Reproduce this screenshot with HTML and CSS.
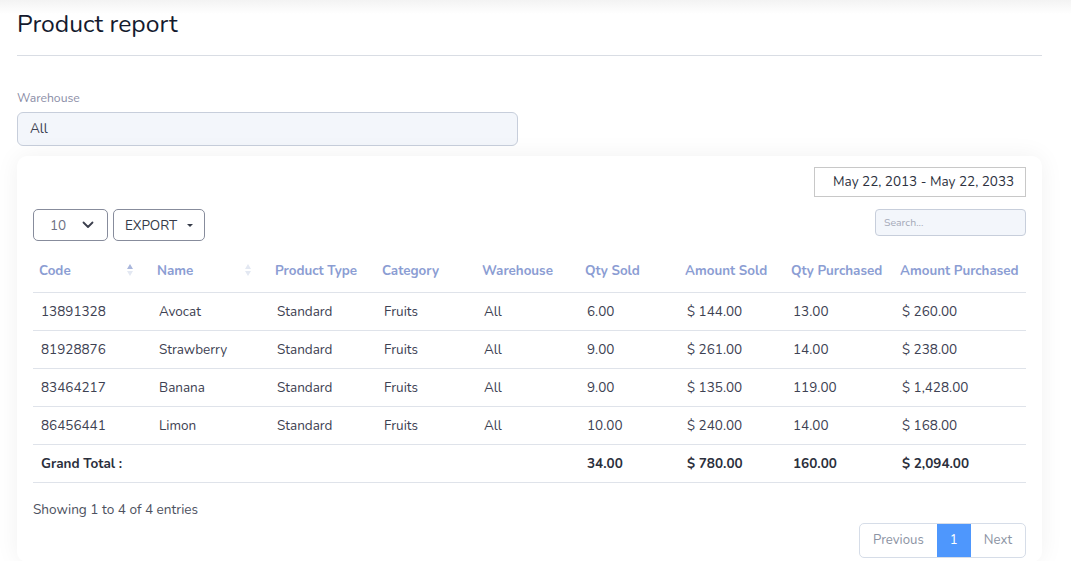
FILE: index.html
```html
<!DOCTYPE html>
<html>
<head>
<meta charset="utf-8">
<link rel="stylesheet" href="styles.css">
</head>
<body>
<div class="topshade"></div>
<main class="page">
  <h1 class="title">Product report</h1>
  <hr class="divider">
  <div class="field">
    <label class="label">Warehouse</label>
    <div class="select-input">All</div>
  </div>
  <section class="card">
    <div class="row-date">
      <div class="date-input">May 22, 2013 - May 22, 2033</div>
    </div>
    <div class="toolbar">
      <div class="left-tools">
        <div class="perpage">
          <span>10</span>
          <svg width="12" height="8" viewBox="0 0 12 8"><path d="M1.5 1.5 L6 6 L10.5 1.5" fill="none" stroke="#3b3f4d" stroke-width="1.8" stroke-linecap="round" stroke-linejoin="round"/></svg>
        </div>
        <div class="export">EXPORT <span class="caret"></span></div>
      </div>
      <div class="search">Search...</div>
    </div>
    <table class="report">
      <colgroup>
        <col style="width:118px"><col style="width:118px"><col style="width:107px"><col style="width:100px"><col style="width:103px"><col style="width:100px"><col style="width:106px"><col style="width:109px"><col>
      </colgroup>
      <thead>
        <tr>
          <th><div class="th-sort">Code <span class="sort"><i class="up active"></i><i class="down"></i></span></div></th>
          <th><div class="th-sort">Name <span class="sort"><i class="up"></i><i class="down"></i></span></div></th>
          <th>Product Type</th>
          <th>Category</th>
          <th>Warehouse</th>
          <th>Qty Sold</th>
          <th>Amount Sold</th>
          <th>Qty Purchased</th>
          <th>Amount Purchased</th>
        </tr>
      </thead>
      <tbody>
        <tr><td>13891328</td><td>Avocat</td><td>Standard</td><td>Fruits</td><td>All</td><td>6.00</td><td>$ 144.00</td><td>13.00</td><td>$ 260.00</td></tr>
        <tr><td>81928876</td><td>Strawberry</td><td>Standard</td><td>Fruits</td><td>All</td><td>9.00</td><td>$ 261.00</td><td>14.00</td><td>$ 238.00</td></tr>
        <tr><td>83464217</td><td>Banana</td><td>Standard</td><td>Fruits</td><td>All</td><td>9.00</td><td>$ 135.00</td><td>119.00</td><td>$ 1,428.00</td></tr>
        <tr><td>86456441</td><td>Limon</td><td>Standard</td><td>Fruits</td><td>All</td><td>10.00</td><td>$ 240.00</td><td>14.00</td><td>$ 168.00</td></tr>
      </tbody>
      <tfoot>
        <tr><td colspan="5">Grand Total :</td><td>34.00</td><td>$ 780.00</td><td>160.00</td><td>$ 2,094.00</td></tr>
      </tfoot>
    </table>
    <div class="info">Showing 1 to 4 of 4 entries</div>
    <div class="pager-row">
      <div class="pager">
        <span class="pg">Previous</span>
        <span class="pg current">1</span>
        <span class="pg">Next</span>
      </div>
    </div>
  </section>
</main>
</body>
</html>
```
FILE: styles.css
```css
* { box-sizing: border-box; }
html, body { margin: 0; padding: 0; background: #fff; }
body {
  font-family: "Nunito", "Noto Sans", "Open Sans", sans-serif;
  color: #3d4152;
  position: relative;
}
.topshade {
  position: absolute; left: 0; right: 0; top: 0; height: 14px;
  background: linear-gradient(#f3f3f3, rgba(255,255,255,0));
}
.page {
  position: relative;
  width: 1025px;
  margin-left: 17px;
  padding-top: 8px;
}
.title {
  margin: 0;
  font-size: 24.7px;
  font-weight: 400;
  color: #141a2e;
  line-height: 32px;
}
.divider {
  border: 0;
  border-top: 1px solid #d9dde4;
  margin: 15px 0 0 0;
}
.field { margin-top: 35px; }
.label {
  display: block;
  font-size: 12.2px;
  color: #8a8da6;
  line-height: 14px;
  margin-bottom: 7px;
}
.select-input {
  width: 501px;
  height: 34px;
  border: 1px solid #c7cedb;
  border-radius: 6px;
  background: #f3f6fb;
  font-size: 13.5px;
  color: #3d4152;
  padding-left: 12px;
  line-height: 32px;
}
.card {
  margin-top: 10px;
  background: #fff;
  border-radius: 10px;
  box-shadow: 0 0 24px rgba(0,0,0,0.06);
  padding: 11px 16px 4px 16px;
}
.row-date { display: flex; justify-content: flex-end; }
.date-input {
  width: 212px;
  height: 30px;
  border: 1px solid #c8c8c8;
  font-size: 13.5px;
  color: #2c3140;
  line-height: 28px;
  padding-left: 18px;
  white-space: nowrap;
}
.toolbar {
  display: flex;
  justify-content: space-between;
  align-items: flex-start;
  margin-top: 12px;
}
.left-tools { display: flex; gap: 5px; }
.perpage {
  width: 75px; height: 32px;
  border: 1px solid #878c9c;
  border-radius: 5px;
  display: flex; align-items: center;
  padding-left: 16px; gap: 16px;
  font-size: 13.5px; color: #6d7283;
}
.export {
  width: 92px; height: 32px;
  border: 1px solid #878c9c;
  border-radius: 5px;
  display: flex; align-items: center; justify-content: center;
  font-size: 13.5px; color: #353a48;
  gap: 6px;
}
.caret {
  display: inline-block; width: 0; height: 0;
  border-left: 3px solid transparent; border-right: 3px solid transparent;
  border-top: 3.5px solid #353a48;
  margin-left: 4px;
}
.search {
  width: 151px; height: 27px;
  border: 1px solid #c7cedb;
  border-radius: 4px;
  background: #f3f6fb;
  font-size: 10.5px;
  color: #a4a9b8;
  padding-left: 8px;
  line-height: 25px;
}
.report {
  width: 100%;
  border-collapse: collapse;
  table-layout: fixed;
  margin-top: 11px;
  font-size: 13.5px;
}
.report th {
  text-align: left;
  color: #8b9dd3;
  font-weight: 700;
  font-size: 13.4px;
  height: 40px;
  padding: 0 6px 3px 6px;
  border-bottom: 1px solid #dfe3ea;
  white-space: nowrap;
  vertical-align: middle;
}
.th-sort { display: flex; align-items: center; justify-content: space-between; padding-right: 12px; }
.sort { display: inline-flex; flex-direction: column; gap: 2px; }
.sort i { display: block; width: 0; height: 0; border-left: 3.5px solid transparent; border-right: 3.5px solid transparent; }
.sort .up { border-bottom: 5px solid #e3e8f2; }
.sort .down { border-top: 5px solid #e3e8f2; }
.sort .up.active { border-bottom-color: #a9b6dc; }
.report td {
  height: 38px;
  padding: 0 8px;
  border-bottom: 1px solid #dfe3ea;
  color: #3d4152;
  white-space: nowrap;
  vertical-align: middle;
}
.report tfoot td { font-weight: 700; color: #2b2f3c; }
.info {
  margin-top: 19px;
  font-size: 13.6px;
  color: #4d5160;
  line-height: 16px;
}
.pager-row { display: flex; justify-content: flex-end; margin-top: 5px; }
.pager {
  display: flex;
  border: 1px solid #d6dde8;
  border-radius: 5px;
  overflow: hidden;
  height: 35px;
}
.pg {
  display: flex; align-items: center; justify-content: center;
  font-size: 13.2px; color: #8c93a3;
  padding: 0 13px;
}
.pg.current { background: #4e97fd; color: #fff; width: 34px; padding: 0; }
```
